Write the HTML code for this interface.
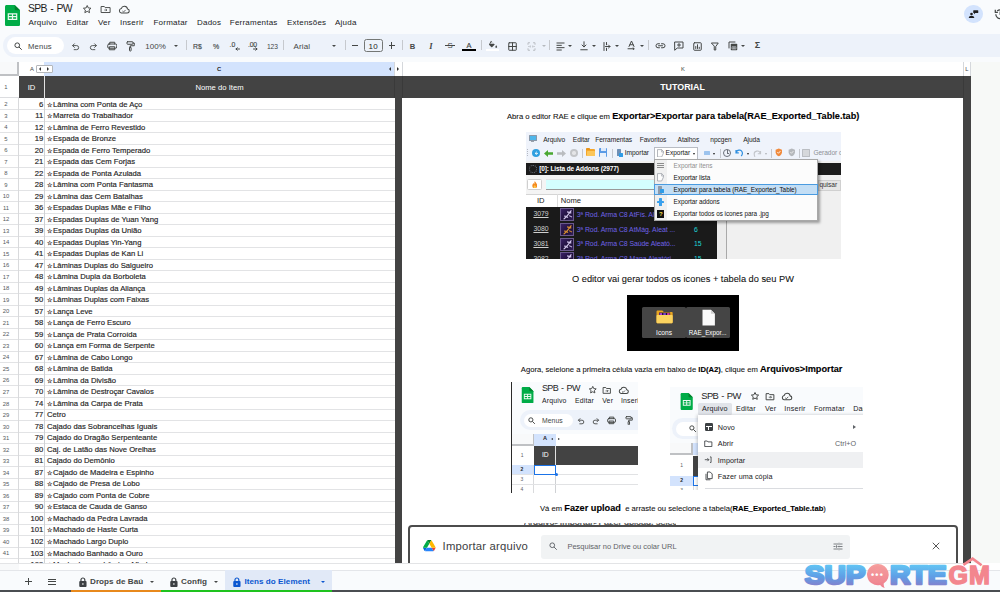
<!DOCTYPE html>
<html lang="pt-BR">
<head>
<meta charset="utf-8">
<title>SPB - PW</title>
<style>
*{box-sizing:border-box;margin:0;padding:0}
html,body{width:1000px;height:592px;overflow:hidden;background:#f9fbfd;font-family:"Liberation Sans",Arial,sans-serif;color:#1f1f1f}
.abs,.abs *{position:absolute}
#page{position:relative;width:1000px;height:592px;overflow:hidden;background:#f9fbfd}
#page div,#page span,#page svg{position:absolute}
.t{white-space:nowrap;line-height:1}
/* header */
#title{left:28px;top:3.200px;font-size:10.400px;letter-spacing:-.7px;word-spacing:1.300px;color:#1f1f1f;white-space:nowrap;line-height:12px}
.menu{top:17px;font-size:8px;letter-spacing:.22px;color:#202124;white-space:nowrap;line-height:11px}
/* toolbar */
#tb{left:3px;top:34px;width:1010px;height:23px;background:#edf2fa;border-radius:11.5px}
#srch{left:7px;top:37px;width:57px;height:17px;border-radius:8.5px;background:#fff}
.tbt{top:41.500px;font-size:7.6px;color:#444746;white-space:nowrap;line-height:10px}
.sep{top:40.300px;width:.9px;height:10.200px;background:#c6c9ce}
.car{width:0;height:0;border-left:2.2px solid transparent;border-right:2.2px solid transparent;border-top:2.6px solid #444746;top:45px}
/* grid */
#grid{left:0;top:62px;width:971px;height:501px;background:#fff;overflow:hidden}
.r{left:0;width:395px;height:12px;border-bottom:1px solid #e2e3e5}
.rn{left:0;top:1px;width:12px;height:11.5px;text-align:center;font-size:5.900px;line-height:11.500px;color:#555a60}
.id{left:19px;top:.35px;-webkit-text-stroke:.16px #1f1f1f;width:24.2px;text-align:right;font-size:7.67px;line-height:11.5px;color:#1f1f1f;white-space:nowrap}
.nm{left:47px;top:.35px;-webkit-text-stroke:.16px #1f1f1f;font-size:7.67px;line-height:11.5px;color:#1f1f1f;white-space:nowrap}
.st{position:static !important;display:inline-block;width:6px;font-size:6.4px;font-weight:bold;-webkit-text-stroke:0;vertical-align:.4px;letter-spacing:0}
.ch{font-size:5.800px;line-height:9px;text-align:center;color:#444746}
.hd{height:21.500px;line-height:21.500px;text-align:center;color:#fff;font-size:7.670px;white-space:nowrap}
.tri-l{width:0;height:0;border-top:2.100px solid transparent;border-bottom:2.100px solid transparent;border-right:2.800px solid #333}
.tri-r{width:0;height:0;border-top:2.100px solid transparent;border-bottom:2.100px solid transparent;border-left:2.800px solid #333}
#rows{left:0;top:62px;width:395px;height:501.400px;overflow:hidden}
.tab{top:575.500px;font-size:8.100px;font-weight:bold;color:#444746;white-space:nowrap;line-height:11px;letter-spacing:.05px}
.tt{white-space:pre;font-size:7.670px;line-height:12px;color:#111;-webkit-text-stroke:.08px #111}
.tt b{position:static !important;font-size:9.200px;-webkit-text-stroke:.1px #000;color:#000}
.tt b.s{font-size:7.670px}
.s1{font-size:6.600px;color:#1a1a1a;letter-spacing:-.05px}
</style>
</head>
<body>
<div id="page">

<!-- ===== header ===== -->
<svg style="left:5px;top:5.100px" width="15" height="21" viewBox="0 0 15 21">
  <path d="M1.6 0h8.1L15 5.3v14.1c0 .9-.7 1.6-1.6 1.6H1.6C.7 21 0 20.300 0 19.400V1.600C0 .7.7 0 1.600 0z" fill="#00ac47"/>
  <path d="M9.700 0L15 5.300h-3.700c-.9 0-1.600-.7-1.600-1.600z" fill="#00832d"/>
  <path d="M2.700 8.200v6.800h9.600V8.200zm1.200 1.200h3v1.600h-3zm4.200 0h3v1.600h-3zm-4.200 2.800h3v1.600h-3zm4.200 0h3v1.600h-3z" fill="#fff" fill-opacity=".92"/>
</svg>
<div id="title">SPB - PW</div>
<!-- star / move / cloud -->
<svg style="left:82.400px;top:3.900px" width="10.400" height="10.400" viewBox="0 0 24 24" fill="none" stroke="#444746" stroke-width="2.200" stroke-linejoin="round"><path d="M12 3.500l2.600 5.600 6.100.7-4.500 4.200 1.200 6L12 17l-5.400 3 1.200-6-4.500-4.200 6.100-.7z"/></svg>
<svg style="left:100.400px;top:5.200px" width="11.200" height="8.600" viewBox="0 0 26 20" fill="none" stroke="#444746" stroke-width="2.200" stroke-linejoin="round"><path d="M2.500 3.500h7.500l2 2.500h11.500v11.500h-21z"/><path d="M10 11.700h6M13.500 9.200l2.500 2.500-2.500 2.500" stroke-width="1.800"/></svg>
<svg style="left:118.400px;top:5px" width="12" height="9.200" viewBox="0 0 26 20" fill="none" stroke="#444746" stroke-width="2.200" stroke-linejoin="round"><path d="M7 17.500h13a4.500 4.500 0 0 0 .6-8.950A7 7 0 0 0 7 7.700 5 5 0 0 0 7 17.500z"/><path d="M9.500 13l2.500 2.300 4.500-4.600" stroke-width="1.800"/></svg>

<div class="menu" style="left:28.400px">Arquivo</div>
<div class="menu" style="left:66.500px">Editar</div>
<div class="menu" style="left:98px">Ver</div>
<div class="menu" style="left:120px">Inserir</div>
<div class="menu" style="left:153.500px">Formatar</div>
<div class="menu" style="left:197px">Dados</div>
<div class="menu" style="left:229.800px">Ferramentas</div>
<div class="menu" style="left:287px">Extensões</div>
<div class="menu" style="left:335px">Ajuda</div>

<!-- top right buttons -->
<div style="left:964.300px;top:4.600px;width:18.600px;height:18.600px;border-radius:9.300px;background:#d3e3fd"></div>
<svg style="left:967.800px;top:8.800px" width="11" height="10" viewBox="0 0 22 20" fill="#1f1f1f"><circle cx="7" cy="10" r="2.600"/><path d="M1.500 18c0-3 2.500-4.600 5.500-4.600s5.500 1.600 5.500 4.600z"/><rect x="10.500" y="2.500" width="10" height="5.500" rx="1.200"/><path d="M12 7.500v3l3-3z"/></svg>
<svg style="left:993.500px;top:7.600px" width="12.400" height="12.400" viewBox="0 0 24 24" fill="none" stroke="#444746" stroke-width="2.400"><path d="M3.500 12a8.500 8.500 0 1 0 2.700-6.200"/><path d="M2.500 3.500v5h5" stroke-linejoin="round"/><path d="M12 7v5.500l3.500 2"/></svg>

<!-- ===== toolbar ===== -->
<div id="tb"></div>
<div id="srch"></div>
<svg style="left:13.500px;top:41.500px" width="8.500" height="8.500" viewBox="0 0 17 17" fill="none" stroke="#444746" stroke-width="2"><circle cx="6.500" cy="6.500" r="4.700"/><path d="M10 10l5.500 5.500"/></svg>
<div class="tbt" style="left:28px;font-size:7.700px;letter-spacing:.15px">Menus</div>
<svg style="left:70.70px;top:41.60px" width="9" height="9" viewBox="0 0 20 20" ><path d="M4 8h8.500a4.500 4.500 0 0 1 0 9H7" fill="none" stroke="#444746" stroke-width="2" stroke-linecap="round" stroke-linejoin="round"/><path d="M7.500 4L3.500 8l4 4" fill="none" stroke="#444746" stroke-width="2" stroke-linecap="round" stroke-linejoin="round"/></svg>
<svg style="left:89.10px;top:41.60px" width="9" height="9" viewBox="0 0 20 20" ><path d="M16 8H7.500a4.500 4.500 0 0 0 0 9H13" fill="none" stroke="#444746" stroke-width="2" stroke-linecap="round" stroke-linejoin="round"/><path d="M12.500 4l4 4-4 4" fill="none" stroke="#444746" stroke-width="2" stroke-linecap="round" stroke-linejoin="round"/></svg>
<svg style="left:106.55px;top:41.10px" width="10.5" height="10" viewBox="0 0 21 20" ><path d="M5.500 6V2.500h10V6" fill="none" stroke="#444746" stroke-width="2" stroke-linecap="round" stroke-linejoin="round"/><rect x="1.500" y="6" width="18" height="8.500" rx="2.500" fill="none" stroke="#444746" stroke-width="2" stroke-linecap="round" stroke-linejoin="round"/><rect x="5.500" y="11.500" width="10" height="6" fill="none" stroke="#444746" stroke-width="2" stroke-linecap="round" stroke-linejoin="round" fill="#edf2fa"/></svg>
<svg style="left:125.70px;top:40.60px" width="9" height="11" viewBox="0 0 18 22" ><rect x="2" y="1.500" width="12" height="5" rx="1.200" fill="none" stroke="#444746" stroke-width="2" stroke-linecap="round" stroke-linejoin="round"/><path d="M14 4h2.500v5.500H8.500v3" fill="none" stroke="#444746" stroke-width="2" stroke-linecap="round" stroke-linejoin="round"/><rect x="7" y="12.500" width="3.200" height="7.500" rx="1" fill="none" stroke="#444746" stroke-width="2" stroke-linecap="round" stroke-linejoin="round"/></svg>
<div class="tbt" style="left:145.2px;font-size:8px;letter-spacing:.1px">100%</div>
<div class="car" style="left:173.80px;border-top-color:#444746"></div>
<div class="sep" style="left:185.90px"></div>
<div class="tbt" style="left:193px;font-size:6.900px;letter-spacing:-.1px;-webkit-text-stroke:.14px #444746">R$</div>
<div class="tbt" style="left:213px;font-size:7px;-webkit-text-stroke:.14px #444746">%</div>
<div class="tbt" style="left:229.5px;font-size:6.900px;-webkit-text-stroke:.14px #444746;top:39.700px">.0</div>
<svg style="left:234.50px;top:47.20px" width="5" height="4" viewBox="0 0 10 8" ><path d="M9 4H2M4.500 1.500L2 4l2.500 2.500" fill="none" stroke="#444746" stroke-width="2" stroke-linecap="round" stroke-linejoin="round" stroke-width="1.700"/></svg>
<div class="tbt" style="left:248px;font-size:6.900px;-webkit-text-stroke:.14px #444746;top:39.700px;letter-spacing:-.2px">.00</div>
<svg style="left:253.00px;top:47.20px" width="5" height="4" viewBox="0 0 10 8" ><path d="M1 4h7M5.500 1.500L8 4 5.500 6.500" fill="none" stroke="#444746" stroke-width="2" stroke-linecap="round" stroke-linejoin="round" stroke-width="1.700"/></svg>
<div class="tbt" style="left:267px;font-size:6.700px;letter-spacing:-.1px">123</div>
<div class="sep" style="left:283.10px"></div>
<div class="tbt" style="left:293.6px;font-size:8px;letter-spacing:.1px">Arial</div>
<div class="car" style="left:331.60px;border-top-color:#444746"></div>
<div class="sep" style="left:345.00px"></div>
<div style="left:351.500px;top:45px;width:6.400px;height:1.200px;background:#444746"></div>
<div style="left:363.600px;top:39.300px;width:19.800px;height:13px;border:1px solid #747775;border-radius:2.500px"></div>
<div class="tbt" style="left:368.6px;font-size:8px;letter-spacing:.1px;color:#1f1f1f">10</div>
<div style="left:388.500px;top:45px;width:6.400px;height:1.200px;background:#444746"></div><div style="left:391.100px;top:42.400px;width:1.200px;height:6.400px;background:#444746"></div>
<div class="sep" style="left:401.50px"></div>
<div class="tbt" style="left:409.8px;font-size:7.600px;font-weight:bold;top:41.600px">B</div>
<div class="tbt" style="left:429.2px;font-size:8.500px;font-weight:bold;font-style:italic;font-family:'Liberation Serif',serif;top:41.200px">I</div>
<div class="tbt" style="left:447.6px;font-size:7.800px;top:41px">S</div>
<div style="left:445px;top:45.300px;width:10px;height:1px;background:#444746"></div>
<div class="tbt" style="left:466.5px;font-size:7.400px;top:40.600px;-webkit-text-stroke:.2px #444746">A</div>
<div style="left:462.200px;top:49px;width:13.600px;height:2px;background:#000"></div>
<div class="sep" style="left:480.80px"></div>
<svg style="left:487.50px;top:39.70px" width="10" height="8" viewBox="0 0 20 16" ><path d="M6 1.500l7.500 7.500-5 5a1.400 1.400 0 0 1-2 0L2.500 10a1.400 1.400 0 0 1 0-2z" fill="#444746"/><path d="M4 7.500L8.200 3.300l4.200 4.200z" fill="#edf2fa"/><path d="M16.500 10.500s1.800 2.200 1.800 3.300a1.800 1.800 0 0 1-3.600 0c0-1.100 1.800-3.300 1.800-3.300z" fill="#444746"/></svg>
<div style="left:486px;top:49px;width:13.200px;height:2px;background:#fff"></div>
<svg style="left:507.70px;top:41.60px" width="9" height="9" viewBox="0 0 18 18" ><rect x="1.500" y="1.500" width="15" height="15" rx="1" fill="none" stroke="#444746" stroke-width="2" stroke-linecap="round" stroke-linejoin="round"/><path d="M9 1.500v15M1.500 9h15" fill="none" stroke="#444746" stroke-width="2" stroke-linecap="round" stroke-linejoin="round"/></svg>
<svg style="left:526.90px;top:41.60px" width="9" height="9" viewBox="0 0 18 18" ><path d="M6 1.500H2v4M2 12.500v4h4M12 1.500h4v4M16 12.500v4h-4M5 9H2.500M13 9h2.500M6.500 7v4M11.500 7v4" fill="none" stroke="#b6b9be" stroke-width="1.800"/></svg>
<div class="car" style="left:541.80px;border-top-color:#b6b9be"></div>
<div class="sep" style="left:549.10px"></div>
<svg style="left:555.50px;top:41.60px" width="9" height="9" viewBox="0 0 18 18" ><path d="M1 2h16M1 6.700h10.500M1 11.300h16M1 16h10.500" fill="none" stroke="#444746" stroke-width="2"/></svg>
<div class="car" style="left:568.20px;border-top-color:#444746"></div>
<svg style="left:579.70px;top:41.10px" width="8" height="10" viewBox="0 0 16 20" ><path d="M8 1.500v10M4 8l4 4 4-4M1.500 17.500h13" fill="none" stroke="#444746" stroke-width="2" stroke-linecap="round" stroke-linejoin="round"/></svg>
<div class="car" style="left:591.50px;border-top-color:#444746"></div>
<svg style="left:603.20px;top:41.60px" width="8" height="9" viewBox="0 0 16 18" ><path d="M2 1v16M7 1v4.500M7 12.500V17M5 9h9M11 6l3 3-3 3" fill="none" stroke="#444746" stroke-width="2" stroke-linecap="round" stroke-linejoin="round" stroke-width="1.800"/></svg>
<div class="car" style="left:615.40px;border-top-color:#444746"></div>
<svg style="left:626.50px;top:40.30px" width="9" height="10" viewBox="0 0 18 20" ><path d="M4 13l5-11 5 11M6 9.500h6" fill="none" stroke="#444746" stroke-width="2" stroke-linecap="round" stroke-linejoin="round" stroke-width="1.900"/><path d="M2 17.500h12M12 15.500l2.200 2-2.200 2" fill="none" stroke="#444746" stroke-width="2" stroke-linecap="round" stroke-linejoin="round" stroke-width="1.500"/></svg>
<div class="car" style="left:639.60px;border-top-color:#444746"></div>
<div class="sep" style="left:648.10px"></div>
<svg style="left:654.50px;top:43.35px" width="11" height="5.5" viewBox="0 0 22 11" ><path d="M9 1.500H6a4 4 0 0 0 0 8h3M13 1.500h3a4 4 0 0 1 0 8h-3M7 5.500h8" fill="none" stroke="#444746" stroke-width="2" stroke-linecap="round" stroke-linejoin="round" stroke-width="1.900"/></svg>
<svg style="left:673.80px;top:41.00px" width="10" height="10" viewBox="0 0 20 20" ><path d="M2 2h16v12H6.500L2 18z" fill="none" stroke="#444746" stroke-width="2" stroke-linecap="round" stroke-linejoin="round"/><path d="M10 5v6M7 8h6" fill="none" stroke="#444746" stroke-width="2" stroke-linecap="round" stroke-linejoin="round" stroke-width="1.800"/></svg>
<svg style="left:692.70px;top:41.60px" width="9" height="9" viewBox="0 0 18 18" ><rect x="1.500" y="1.500" width="15" height="15" rx="1.500" fill="none" stroke="#444746" stroke-width="2" stroke-linecap="round" stroke-linejoin="round"/><path d="M5.500 13V9M9 13V5.500M12.500 13v-2.500" fill="none" stroke="#444746" stroke-width="2" stroke-linecap="round" stroke-linejoin="round" stroke-width="1.800"/></svg>
<svg style="left:711.20px;top:41.60px" width="8" height="9" viewBox="0 0 16 18" ><path d="M1.500 2h13L9.500 9v7h-3V9z" fill="none" stroke="#444746" stroke-width="2" stroke-linecap="round" stroke-linejoin="round"/></svg>
<svg style="left:727.80px;top:41.10px" width="10" height="10" viewBox="0 0 20 20" ><path d="M2 14V2h12" fill="none" stroke="#444746" stroke-width="2" stroke-linecap="round" stroke-linejoin="round"/><rect x="5.500" y="5.500" width="13" height="13" rx="1.500" fill="#444746"/><path d="M8 11.500h8v4.500H8zM10.700 11.500v4.500M13.400 11.500v4.500" fill="none" stroke="#edf2fa" stroke-width="1"/></svg>
<div class="car" style="left:741.30px;border-top-color:#444746"></div>
<div class="tbt" style="left:754.8px;font-size:9px;font-weight:bold;top:40.300px">Σ</div>

<!-- ===== grid ===== -->
<div style="left:971px;top:61.700px;width:29px;height:509px;background:#f7f9f7"></div>
<div id="grid"></div>
<div id="rows"><div class="r" style="top:36.2px"><span class="rn">2</span><span class="id">6</span><span class="nm"><span class="st">☆</span>Lâmina com Ponta de Aço</span></div>
<div class="r" style="top:47.712px"><span class="rn">3</span><span class="id">11</span><span class="nm"><span class="st">☆</span>Marreta do Trabalhador</span></div>
<div class="r" style="top:59.224000000000004px"><span class="rn">4</span><span class="id">12</span><span class="nm"><span class="st">☆</span>Lâmina de Ferro Revestido</span></div>
<div class="r" style="top:70.736px"><span class="rn">5</span><span class="id">19</span><span class="nm"><span class="st">☆</span>Espada de Bronze</span></div>
<div class="r" style="top:82.248px"><span class="rn">6</span><span class="id">20</span><span class="nm"><span class="st">☆</span>Espada de Ferro Temperado</span></div>
<div class="r" style="top:93.76px"><span class="rn">7</span><span class="id">21</span><span class="nm"><span class="st">☆</span>Espada das Cem Forjas</span></div>
<div class="r" style="top:105.272px"><span class="rn">8</span><span class="id">22</span><span class="nm"><span class="st">☆</span>Espada de Ponta Azulada</span></div>
<div class="r" style="top:116.784px"><span class="rn">9</span><span class="id">28</span><span class="nm"><span class="st">☆</span>Lâmina com Ponta Fantasma</span></div>
<div class="r" style="top:128.296px"><span class="rn">10</span><span class="id">29</span><span class="nm"><span class="st">☆</span>Lâmina das Cem Batalhas</span></div>
<div class="r" style="top:139.808px"><span class="rn">11</span><span class="id">36</span><span class="nm"><span class="st">☆</span>Espadas Duplas Mãe e Filho</span></div>
<div class="r" style="top:151.32px"><span class="rn">12</span><span class="id">37</span><span class="nm"><span class="st">☆</span>Espadas Duplas de Yuan Yang</span></div>
<div class="r" style="top:162.832px"><span class="rn">13</span><span class="id">39</span><span class="nm"><span class="st">☆</span>Espadas Duplas da União</span></div>
<div class="r" style="top:174.344px"><span class="rn">14</span><span class="id">40</span><span class="nm"><span class="st">☆</span>Espadas Duplas Yin-Yang</span></div>
<div class="r" style="top:185.856px"><span class="rn">15</span><span class="id">41</span><span class="nm"><span class="st">☆</span>Espadas Duplas de Kan Li</span></div>
<div class="r" style="top:197.368px"><span class="rn">16</span><span class="id">47</span><span class="nm"><span class="st">☆</span>Lâminas Duplas do Salgueiro</span></div>
<div class="r" style="top:208.88px"><span class="rn">17</span><span class="id">48</span><span class="nm"><span class="st">☆</span>Lâmina Dupla da Borboleta</span></div>
<div class="r" style="top:220.392px"><span class="rn">18</span><span class="id">49</span><span class="nm"><span class="st">☆</span>Lâminas Duplas da Aliança</span></div>
<div class="r" style="top:231.904px"><span class="rn">19</span><span class="id">50</span><span class="nm"><span class="st">☆</span>Lâminas Duplas com Faixas</span></div>
<div class="r" style="top:243.416px"><span class="rn">20</span><span class="id">57</span><span class="nm"><span class="st">☆</span>Lança Leve</span></div>
<div class="r" style="top:254.928px"><span class="rn">21</span><span class="id">58</span><span class="nm"><span class="st">☆</span>Lança de Ferro Escuro</span></div>
<div class="r" style="top:266.44px"><span class="rn">22</span><span class="id">59</span><span class="nm"><span class="st">☆</span>Lança de Prata Corroída</span></div>
<div class="r" style="top:277.952px"><span class="rn">23</span><span class="id">60</span><span class="nm"><span class="st">☆</span>Lança em Forma de Serpente</span></div>
<div class="r" style="top:289.464px"><span class="rn">24</span><span class="id">67</span><span class="nm"><span class="st">☆</span>Lâmina de Cabo Longo</span></div>
<div class="r" style="top:300.976px"><span class="rn">25</span><span class="id">68</span><span class="nm"><span class="st">☆</span>Lâmina de Batida</span></div>
<div class="r" style="top:312.488px"><span class="rn">26</span><span class="id">69</span><span class="nm"><span class="st">☆</span>Lâmina da Divisão</span></div>
<div class="r" style="top:324.0px"><span class="rn">27</span><span class="id">70</span><span class="nm"><span class="st">☆</span>Lâmina de Destroçar Cavalos</span></div>
<div class="r" style="top:335.512px"><span class="rn">28</span><span class="id">74</span><span class="nm"><span class="st">☆</span>Lâmina da Carpa de Prata</span></div>
<div class="r" style="top:347.024px"><span class="rn">29</span><span class="id">77</span><span class="nm">Cetro</span></div>
<div class="r" style="top:358.536px"><span class="rn">30</span><span class="id">78</span><span class="nm">Cajado das Sobrancelhas Iguais</span></div>
<div class="r" style="top:370.048px"><span class="rn">31</span><span class="id">79</span><span class="nm">Cajado do Dragão Serpenteante</span></div>
<div class="r" style="top:381.56px"><span class="rn">32</span><span class="id">80</span><span class="nm">Caj. de Latão das Nove Orelhas</span></div>
<div class="r" style="top:393.072px"><span class="rn">33</span><span class="id">81</span><span class="nm">Cajado do Demônio</span></div>
<div class="r" style="top:404.584px"><span class="rn">34</span><span class="id">87</span><span class="nm"><span class="st">☆</span>Cajado de Madeira e Espinho</span></div>
<div class="r" style="top:416.096px"><span class="rn">35</span><span class="id">88</span><span class="nm"><span class="st">☆</span>Cajado de Presa de Lobo</span></div>
<div class="r" style="top:427.608px"><span class="rn">36</span><span class="id">89</span><span class="nm"><span class="st">☆</span>Cajado com Ponta de Cobre</span></div>
<div class="r" style="top:439.12px"><span class="rn">37</span><span class="id">90</span><span class="nm"><span class="st">☆</span>Estaca de Cauda de Ganso</span></div>
<div class="r" style="top:450.632px"><span class="rn">38</span><span class="id">100</span><span class="nm"><span class="st">☆</span>Machado da Pedra Lavrada</span></div>
<div class="r" style="top:462.144px"><span class="rn">39</span><span class="id">101</span><span class="nm"><span class="st">☆</span>Machado de Haste Curta</span></div>
<div class="r" style="top:473.656px"><span class="rn">40</span><span class="id">102</span><span class="nm"><span class="st">☆</span>Machado Largo Duplo</span></div>
<div class="r" style="top:485.168px"><span class="rn">41</span><span class="id">103</span><span class="nm"><span class="st">☆</span>Machado Banhado a Ouro</span></div>
<div class="r" style="top:496.68px"><span class="rn">42</span><span class="id">109</span><span class="nm"><span class="st">☆</span>Machado com Lâmina Afiada</span></div></div>
<div style="left:0;top:62px;width:17.200px;height:11.700px;background:#f8f9fa"></div>
<div style="left:17.200px;top:62px;width:1.700px;height:13.600px;background:#bfc1c4"></div>
<div style="left:0;top:73.700px;width:18.900px;height:1.900px;background:#bfc1c4"></div>
<div style="left:44.300px;top:62px;width:350.200px;height:14px;background:#d3e3fd"></div>
<div class="ch" style="left:28px;top:64.500px;width:8px">A</div>
<div class="ch" style="left:215px;top:64.500px;width:8px;font-weight:bold;color:#1f1f1f">C</div>
<div class="ch" style="left:679px;top:64.500px;width:8px">K</div>
<div class="ch" style="left:962.800px;top:64.500px;width:8px">L</div>
<div style="left:36.400px;top:65px;width:16.200px;height:7.800px;background:#fff;border:1px solid #b4b7bb;border-radius:1px"></div>
<div class="tri-l" style="left:39px;top:66.800px"></div><div class="tri-r" style="left:47.200px;top:66.800px"></div>
<div class="tri-l" style="left:389px;top:66.800px"></div><div class="tri-r" style="left:397.200px;top:66.800px"></div>
<div style="left:394.300px;top:62px;width:.7px;height:14px;background:#d5d8dc"></div>
<div style="left:401.800px;top:62px;width:.7px;height:14px;background:#d5d8dc"></div>
<div style="left:962.800px;top:62px;width:.8px;height:14px;background:#d5d8dc"></div>
<div style="left:970.400px;top:62px;width:.8px;height:14px;background:#d5d8dc"></div>
<div style="left:19px;top:75.800px;width:952px;height:21.800px;background:#434343"></div>
<div style="left:394.600px;top:75.800px;width:7.500px;height:487.600px;background:#434343"></div>
<div style="left:963.200px;top:75.800px;width:7.800px;height:487.600px;background:#434343"></div>
<div style="left:394.300px;top:75.800px;width:.7px;height:21.800px;background:#3a3a3a"></div>
<div style="left:401.800px;top:75.800px;width:.7px;height:21.800px;background:#3a3a3a"></div>
<div style="left:962.800px;top:75.800px;width:.7px;height:21.800px;background:#3a3a3a"></div>
<div style="left:18.200px;top:97.600px;width:.8px;height:472.600px;background:#d9dadc"></div>
<div style="left:43.900px;top:75.800px;width:1.100px;height:21.800px;background:#e3e3e3"></div>
<div style="left:44px;top:97.600px;width:.9px;height:465.800px;background:#d0d2d5"></div>
<div class="rn" style="top:82px;left:0">1</div>
<div style="left:0;top:97px;width:18.500px;height:.8px;background:#dcdde0"></div>
<div class="hd" style="left:19px;top:76.600px;width:25px">ID</div>
<div class="hd" style="left:45px;top:76.600px;width:349px">Nome do Item</div>
<div class="hd" style="left:402px;top:76.800px;width:561px;font-weight:bold;font-size:8.900px">TUTORIAL</div>
<div class="tt" style="left:507.00px;top:109.80px;">Abra o editor RAE e clique em <b>Exportar&gt;Exportar para tabela(RAE_Exported_Table.tab)</b></div>
<div class="tt" style="left:572.00px;top:272.50px;font-size:9.250px">O editor vai gerar todos os icones + tabela do seu PW</div>
<div class="tt" style="left:520.80px;top:362.80px;">Agora, seleione a primeira célula vazia em baixo de <b class="s">ID(A2)</b>, clique em <b>Arquivos&gt;Importar</b></div>
<div class="tt" style="left:540.00px;top:502.30px;">Vá em <b>Fazer upload</b>&nbsp; e arraste ou selecione a tabela(<b class="s">RAE_Exported_Table.tab</b>)</div>
<div style="left:525.60px;top:132.00px;width:315.40px;height:126.60px;overflow:hidden;background:#fff"><div style="left:0.00px;top:0.00px;width:315.40px;height:29.00px;background:#eff3fb"></div>
<div style="left:0.00px;top:29.20px;width:315.40px;height:14.20px;background:#f0f0f0"></div>
<div style="left:0.00px;top:30.60px;width:315.40px;height:12.10px;background:#1c1c1c"></div>
<div style="left:0.00px;top:42.70px;width:201.00px;height:19.00px;background:#f4f4f4"></div>
<div style="left:201.20px;top:42.70px;width:114.20px;height:84.00px;background:#f0f0f0"></div>
<div style="left:200.60px;top:42.70px;width:1.00px;height:84.00px;background:#a9a9a9"></div>
<div style="left:190.90px;top:42.70px;width:9.70px;height:84.00px;background:#ececec"></div>
<div style="left:3.20px;top:3.20px;width:8.00px;height:5.60px;background:#4fb6ea;border:0.8px solid #8a98a8;border-radius:.6px"></div>
<div style="left:5.70px;top:9.00px;width:3.00px;height:1.40px;background:#9aa3ad"></div>
<div class="t s1" style="left:17.60px;top:4.50px;">Arquivo</div>
<div class="t s1" style="left:47.20px;top:4.50px;">Editar</div>
<div class="t s1" style="left:69.60px;top:4.50px;">Ferramentas</div>
<div class="t s1" style="left:114.10px;top:4.50px;">Favoritos</div>
<div class="t s1" style="left:152.00px;top:4.50px;">Atalhos</div>
<div class="t s1" style="left:184.70px;top:4.50px;">npcgen</div>
<div class="t s1" style="left:217.60px;top:4.50px;">Ajuda</div>
<div style="left:1.40px;top:16.50px;width:1.00px;height:8.50px;background:repeating-linear-gradient(#b5b9c2 0 1px,transparent 1px 2px)"></div>
<div style="left:6.20px;top:16.70px;width:8.40px;height:8.40px;background:#2f9fe0;border-radius:50%"></div>
<svg style="left:8.00px;top:18.50px" width="4.800" height="4.800" viewBox="0 0 10 10"><path d="M6 1.500L2.500 5 6 8.500M2.500 5h6" fill="none" stroke="#fff" stroke-width="1.800"/></svg>
<svg style="left:18.70px;top:17.50px" width="9" height="7" viewBox="0 0 18 14"><path d="M8 0L0 7l8 7v-4.300h10V4.300H8z" fill="#4aa832"/></svg>
<svg style="left:31.20px;top:17.50px" width="9" height="7" viewBox="0 0 18 14"><path d="M10 0l8 7-8 7v-4.300H0V4.300h10z" fill="#b9bcc0"/></svg>
<div style="left:44.40px;top:16.90px;width:8.00px;height:8.00px;background:#c3c5c8;border-radius:50%"></div>
<div style="left:46.70px;top:19.20px;width:3.40px;height:3.40px;background:#e4e5e7;border-radius:50%"></div>
<div style="left:56.80px;top:16.50px;width:0.80px;height:9.00px;background:#c5c8ce"></div>
<div style="left:60.60px;top:17.20px;width:8.60px;height:7.00px;background:#f4a62a;border-radius:1px"></div>
<div style="left:60.60px;top:16.40px;width:4.00px;height:1.60px;background:#e8951a;border-radius:.8px .8px 0 0"></div>
<div style="left:61.40px;top:19.00px;width:7.80px;height:5.20px;background:#fbc65a;border-radius:.6px"></div>
<div style="left:73.40px;top:16.30px;width:8.40px;height:9.00px;background:#5b9be6;border-radius:1px"></div>
<div style="left:75.20px;top:16.30px;width:4.80px;height:3.20px;background:#dfeafa"></div>
<div style="left:74.80px;top:21.20px;width:5.60px;height:4.10px;background:#eaf1fb"></div>
<div style="left:86.10px;top:16.50px;width:0.80px;height:9.00px;background:#c5c8ce"></div>
<div style="left:91.00px;top:16.80px;width:4.60px;height:7.60px;background:#6f8fb5;border-radius:.6px"></div>
<div style="left:93.00px;top:20.60px;width:4.00px;height:4.00px;background:#2e9be6;border-radius:.5px"></div>
<div class="t s1" style="left:99.20px;top:18.10px;">Importar</div>
<div style="left:128.20px;top:14.60px;width:44.60px;height:13.20px;background:#fff;border:.8px solid #b8bcc4"></div>
<svg style="left:131.00px;top:16.60px" width="7.400" height="8.600" viewBox="0 0 15 17"><path d="M1 1h8.500L14 6l-4.500 10H1z" fill="#fdfdfd" stroke="#8a8f98" stroke-width="1.300"/><path d="M9.500 1v5H14" fill="none" stroke="#8a8f98" stroke-width="1.200"/></svg>
<div class="t s1" style="left:140.00px;top:18.10px;">Exportar</div>
<div style="left:167.60px;top:20.80px;width:0.00px;height:0.00px;border-left:1.700px solid transparent;border-right:1.700px solid transparent;border-top:2.200px solid #222"></div>
<div style="left:178.40px;top:18.80px;width:6.00px;height:4.00px;background:#9cc3ee;border-radius:.5px"></div>
<div style="left:187.00px;top:20.80px;width:0.00px;height:0.00px;border-left:1.600px solid transparent;border-right:1.600px solid transparent;border-top:2.100px solid #222"></div>
<div style="left:194.20px;top:16.50px;width:0.80px;height:9.00px;background:#c5c8ce"></div>
<div style="left:197.60px;top:16.80px;width:8.00px;height:8.00px;border:1px solid #6b7079;border-radius:50%"></div>
<div style="left:201.20px;top:18.40px;width:0.90px;height:3.00px;background:#6b7079"></div>
<div style="left:201.20px;top:20.80px;width:2.40px;height:0.90px;background:#6b7079"></div>
<svg style="left:209.90px;top:17.00px" width="8.600" height="7.600" viewBox="0 0 17 15"><path d="M2 2v5.500h5.500M2.500 7A6 6 0 0 1 14.500 9.500c0 2-1 3.500-2.500 4.500" fill="none" stroke="#2f8fe0" stroke-width="2.400"/></svg>
<div style="left:221.20px;top:20.80px;width:0.00px;height:0.00px;border-left:1.600px solid transparent;border-right:1.600px solid transparent;border-top:2.100px solid #222"></div>
<svg style="left:227.60px;top:17.60px" width="8.600" height="7" viewBox="0 0 17 14"><path d="M15 2v5.500H9.500M14.500 7A6 6 0 0 0 2.500 9.500c0 1.600.6 3 1.600 4" fill="none" stroke="#c2c5ca" stroke-width="2.200"/></svg>
<div style="left:239.20px;top:20.80px;width:0.00px;height:0.00px;border-left:1.600px solid transparent;border-right:1.600px solid transparent;border-top:2.100px solid #b0b3b8"></div>
<div style="left:245.80px;top:16.50px;width:0.80px;height:9.00px;background:#c5c8ce"></div>
<svg style="left:249.80px;top:16.40px" width="7.600" height="8.800" viewBox="0 0 15 18"><path d="M7.500 1L14 3.500v5c0 4-3 7-6.500 8.500C4 15.500 1 12.500 1 8.500v-5z" fill="#f08a3c"/><path d="M4.500 8.500l2.300 2.300 4-4.500" fill="none" stroke="#fff" stroke-width="1.800"/></svg>
<svg style="left:262.30px;top:16.40px" width="7.600" height="8.800" viewBox="0 0 15 18"><path d="M7.500 1L14 3.500v5c0 4-3 7-6.500 8.500C4 15.500 1 12.500 1 8.500v-5z" fill="#b5b8bc"/><path d="M4.500 8.500l2.300 2.300 4-4.500" fill="none" stroke="#eee" stroke-width="1.800"/></svg>
<div style="left:273.80px;top:16.50px;width:0.80px;height:9.00px;background:#c5c8ce"></div>
<div style="left:276.80px;top:16.60px;width:7.20px;height:8.60px;background:#d6d8db;border:.8px solid #bbbec3;border-radius:.6px"></div>
<div class="t s1" style="left:287.80px;top:18.10px;color:#8d9096">Gerador de</div>
<div style="left:3.40px;top:32.60px;width:8.00px;height:8.00px;border:1.200px dotted #6f7782;border-radius:50%"></div>
<div class="t s1" style="left:13.60px;top:33.90px;color:#fff;font-weight:bold;font-size:6.500px;letter-spacing:-.12px">[0]: Lista de Addons (2977)</div>
<div style="left:1.60px;top:46.90px;width:14.40px;height:11.20px;background:#fff;border:.8px solid #cfcfcf;border-radius:1.500px"></div>
<svg style="left:6.00px;top:48.80px" width="5.600" height="7.400" viewBox="0 0 11 15"><path d="M5.500 0C6.500 3 10.500 5 10.500 9.500 10.500 13 8 15 5.500 15S.5 13 .5 9.500C.5 7 2 5.500 3 4c.3 1.500 1 2.300 1.500 2.500C4.500 4 4.800 2 5.500 0z" fill="#f58a1f"/><path d="M5.500 8c1 1.500 2.500 2.300 2.500 4.200C8 13.800 6.800 15 5.500 15S3 13.800 3 12.200C3 10.300 4.800 9.500 5.500 8z" fill="#fcc84a"/></svg>
<div style="left:20.80px;top:47.30px;width:180.00px;height:11.00px;background:#d4ffff;border-bottom:.8px solid #9a9a9a;border-top:.6px solid #e4e4e4"></div>
<div style="left:0.00px;top:61.60px;width:191.00px;height:13.50px;background:#fff;border-top:.7px solid #d5d5d5"></div>
<div style="left:31.40px;top:61.60px;width:0.70px;height:13.50px;background:#dcdcdc"></div>
<div class="t s1" style="left:11.40px;top:65.30px;font-size:7.600px;color:#222">ID</div>
<div class="t s1" style="left:35.20px;top:65.30px;font-size:7.600px;color:#222">Nome</div>
<div style="left:0.00px;top:75.10px;width:191.00px;height:52.00px;background:#1a1a1a"></div>
<div class="t s1" style="left:7.80px;top:79.40px;color:#cfcfcf;text-decoration:underline;font-size:6.900px;letter-spacing:-.05px">3079</div>
<div style="left:34.60px;top:75.70px;width:13.40px;height:13.80px;background:linear-gradient(135deg,#3a2166,#1d0f38 60%,#34205c);border:.8px solid #6a5a8c"></div>
<svg style="left:36.00px;top:76.80px" width="11" height="11.600" viewBox="0 0 11 12"><path d="M1.500 10.500C4 9 6 6 9.500 1.500M5 3c1.500 0 3 1 4.500 1M2 7.500c1.500-.5 2.500 0 4 1.500M7 7c1 0 2 .5 3 1.500" fill="none" stroke="#e6d8ff" stroke-width="1.200" stroke-opacity=".9"/></svg>
<div class="t s1" style="left:51.20px;top:79.50px;color:#6f62e8;font-size:6.900px;font-family:'Liberation Sans',sans-serif">3ª Rod. Arma C8 AtFís. Aleat...</div>
<div class="t s1" style="left:168.40px;top:79.50px;color:#1fd6d6;font-size:6.900px">5</div>
<div class="t s1" style="left:7.80px;top:94.40px;color:#cfcfcf;text-decoration:underline;font-size:6.900px;letter-spacing:-.05px">3080</div>
<div style="left:34.60px;top:90.70px;width:13.40px;height:13.80px;background:linear-gradient(135deg,#3a2166,#1d0f38 60%,#34205c);border:.8px solid #6a5a8c"></div>
<svg style="left:36.00px;top:91.80px" width="11" height="11.600" viewBox="0 0 11 12"><path d="M1.500 10.500C4 9 6 6 9.500 1.500M5 3c1.500 0 3 1 4.500 1M2 7.500c1.500-.5 2.500 0 4 1.500M7 7c1 0 2 .5 3 1.500" fill="none" stroke="#f0a030" stroke-width="1.200" stroke-opacity=".9"/></svg>
<div class="t s1" style="left:51.20px;top:94.50px;color:#6f62e8;font-size:6.900px;font-family:'Liberation Sans',sans-serif">3ª Rod. Arma C8 AtMág. Aleat ...</div>
<div class="t s1" style="left:168.40px;top:94.50px;color:#1fd6d6;font-size:6.900px">6</div>
<div class="t s1" style="left:7.80px;top:109.20px;color:#cfcfcf;text-decoration:underline;font-size:6.900px;letter-spacing:-.05px">3081</div>
<div style="left:34.60px;top:105.50px;width:13.40px;height:13.80px;background:linear-gradient(135deg,#3a2166,#1d0f38 60%,#34205c);border:.8px solid #6a5a8c"></div>
<svg style="left:36.00px;top:106.60px" width="11" height="11.600" viewBox="0 0 11 12"><path d="M1.500 10.500C4 9 6 6 9.500 1.500M5 3c1.500 0 3 1 4.500 1M2 7.500c1.500-.5 2.500 0 4 1.500M7 7c1 0 2 .5 3 1.500" fill="none" stroke="#e6d8ff" stroke-width="1.200" stroke-opacity=".9"/></svg>
<div class="t s1" style="left:51.20px;top:109.30px;color:#6f62e8;font-size:6.900px;font-family:'Liberation Sans',sans-serif">3ª Rod. Arma C8 Saúde Aleató...</div>
<div class="t s1" style="left:168.40px;top:109.30px;color:#1fd6d6;font-size:6.900px">15</div>
<div class="t s1" style="left:7.80px;top:124.00px;color:#cfcfcf;text-decoration:underline;font-size:6.900px;letter-spacing:-.05px">3082</div>
<div style="left:34.60px;top:120.30px;width:13.40px;height:13.80px;background:linear-gradient(135deg,#3a2166,#1d0f38 60%,#34205c);border:.8px solid #6a5a8c"></div>
<svg style="left:36.00px;top:121.40px" width="11" height="11.600" viewBox="0 0 11 12"><path d="M1.500 10.500C4 9 6 6 9.500 1.500M5 3c1.500 0 3 1 4.500 1M2 7.500c1.500-.5 2.500 0 4 1.500M7 7c1 0 2 .5 3 1.500" fill="none" stroke="#e6d8ff" stroke-width="1.200" stroke-opacity=".9"/></svg>
<div class="t s1" style="left:51.20px;top:124.10px;color:#6f62e8;font-size:6.900px;font-family:'Liberation Sans',sans-serif">3ª Rod. Arma C8 Mana Aleatóri...</div>
<div class="t s1" style="left:168.40px;top:124.10px;color:#1fd6d6;font-size:6.900px">15</div>
<div style="left:292.40px;top:48.00px;width:23.00px;height:11.00px;background:#e6e6e6;border:.7px solid #d0d0d0"></div>
<div class="t s1" style="left:293.80px;top:50.30px;color:#333">quisar</div>
<div style="left:128.20px;top:27.20px;width:164.40px;height:61.80px;background:#fcfcfc;border:.8px solid #a8a8a8;box-shadow:1.500px 1.500px 2.500px rgba(0,0,0,.35)"></div>
<div style="left:129.00px;top:28.00px;width:12.40px;height:60.20px;background:#f0f0f0"></div>
<div style="left:128.80px;top:51.80px;width:163.20px;height:11.60px;background:#c3def5;border:.8px solid #4a9be0"></div>
<div class="t s1" style="left:148.00px;top:31.10px;color:#8f8f8f;font-size:6.400px">Exportar itens</div>
<div class="t s1" style="left:148.00px;top:43.10px;color:#111;font-size:6.400px">Exportar lista</div>
<div class="t s1" style="left:148.00px;top:55.20px;color:#111;font-size:6.400px">Exportar para tabela (RAE_Exported_Table)</div>
<div class="t s1" style="left:148.00px;top:67.40px;color:#111;font-size:6.400px">Exportar addons</div>
<div class="t s1" style="left:148.00px;top:79.40px;color:#111;font-size:6.400px">Exportar todos os icones para .jpg</div>
<div style="left:131.40px;top:31.20px;width:6.60px;height:0.90px;background:#8c8c8c"></div>
<div style="left:131.40px;top:33.10px;width:6.60px;height:0.90px;background:#8c8c8c"></div>
<div style="left:131.40px;top:35.00px;width:6.60px;height:0.90px;background:#8c8c8c"></div>
<svg style="left:131.20px;top:41.20px" width="7.400" height="8.600" viewBox="0 0 15 17"><path d="M1 1h8.500L14 6l-4.500 10H1z" fill="#fdfdfd" stroke="#8a8f98" stroke-width="1.300"/><path d="M9.500 1v5H14" fill="none" stroke="#8a8f98" stroke-width="1.200"/></svg>
<div style="left:132.00px;top:53.60px;width:4.40px;height:8.00px;background:#8f9aa8;border-radius:.5px"></div>
<div style="left:134.20px;top:57.00px;width:4.20px;height:4.40px;background:#2e9be6;border-radius:.5px"></div>
<div style="left:131.20px;top:68.80px;width:7.60px;height:2.40px;background:#3aa0ec;border-radius:.6px"></div>
<div style="left:133.80px;top:66.20px;width:2.40px;height:7.60px;background:#3aa0ec;border-radius:.6px"></div>
<div style="left:131.60px;top:78.00px;width:6.40px;height:7.60px;background:#111"></div>
<div class="t s1" style="left:133.30px;top:78.90px;color:#ffe14a;font-weight:bold;font-size:6px">?</div></div>
<div style="left:626.60px;top:294.60px;width:112.60px;height:56.80px;background:#000"></div>
<div style="left:642.40px;top:307.00px;width:43.20px;height:30.80px;background:#454545;border-radius:1.500px"></div>
<div style="left:686.40px;top:307.00px;width:43.20px;height:30.80px;background:#454545;border-radius:1.500px"></div>
<svg style="left:655.800px;top:310.400px" width="17.200" height="13.200" viewBox="0 0 34 26"><path d="M1 3.500C1 2 2 1 3.500 1h9l3 3H31c1.200 0 2 .8 2 2v17.500c0 1.400-1 2.500-2.500 2.500h-27C2 26 1 25 1 23.500z" fill="#e9a521"/><rect x="6" y="5" width="22" height="9" fill="#1d1430"/><rect x="7" y="6" width="5" height="7" fill="#b03fd0"/><rect x="14.500" y="6" width="5" height="7" fill="#7b3fd0"/><rect x="22" y="6" width="5" height="7" fill="#d03fa0"/><path d="M1 12c0-1.200 1-2 2-2h28c1.200 0 2 .8 2 2v11.500c0 1.400-1 2.500-2.500 2.500h-27C2 26 1 25 1 23.500z" fill="#fbd35f"/></svg>
<svg style="left:701.800px;top:308.800px" width="13.400" height="17.200" viewBox="0 0 27 34"><path d="M1 1h17l8 8v24H1z" fill="#fafafa"/><path d="M18 1v8h8z" fill="#cfcfcf"/></svg>
<div class="t" style="left:656.00px;top:329.60px;color:#fff;font-size:6.600px;letter-spacing:.05px">Icons</div>
<div class="t" style="left:688.80px;top:329.60px;color:#fff;font-size:6.300px;letter-spacing:-.02px">RAE_Expor...</div>
<div style="left:511.60px;top:382.00px;width:126.20px;height:111.10px;overflow:hidden;background:#f9fbfd"><svg style="left:9.60px;top:4.50px" width="13.2" height="16.4" viewBox="0 0 15 21"><path d="M1.600 0h8.100L15 5.300v14.100c0 .9-.7 1.600-1.600 1.600H1.600C.7 21 0 20.300 0 19.400V1.600C0 .7.7 0 1.600 0z" fill="#00ac47"/><path d="M9.700 0L15 5.300h-3.700c-.9 0-1.600-.7-1.600-1.600z" fill="#00832d"/><path d="M2.700 8.800v6.800h9.600V8.800zm1.200 1.200h3v1.600h-3zm4.200 0h3v1.600h-3zm-4.200 2.800h3v1.600h-3zm4.200 0h3v1.600h-3z" fill="#fff" fill-opacity=".92"/></svg>
<div class="t" style="left:30.30px;top:1.40px;font-size:9px;letter-spacing:-.6px;word-spacing:1.100px;color:#1f1f1f;line-height:11px">SPB - PW</div>
<svg style="left:76.35px;top:2.85px" width="9.5" height="9.5" viewBox="0 0 24 24" fill="none" stroke="#444746" stroke-width="2.400" stroke-linejoin="round"><path d="M12 3.500l2.600 5.600 6.100.7-4.500 4.200 1.200 6L12 17l-5.400 3 1.200-6-4.500-4.200 6.100-.7z"/></svg>
<svg style="left:90.65px;top:3.55px" width="9.5" height="8.5" viewBox="0 0 24 22" fill="none" stroke="#444746" stroke-width="2.400" stroke-linejoin="round"><path d="M2.500 4h7l2 2.500h10V19h-19z"/><path d="M9 12.700h6.500M13 10l2.700 2.700L13 15.400" stroke-width="2"/></svg>
<svg style="left:106.40px;top:3.55px" width="11" height="8.5" viewBox="0 0 26 20" fill="none" stroke="#444746" stroke-width="2.400" stroke-linejoin="round"><path d="M7 17.500h13a4.500 4.500 0 0 0 .6-8.950A7 7 0 0 0 7 7.700 5 5 0 0 0 7 17.500z"/><path d="M9.500 13l2.500 2.300 4.500-4.600" stroke-width="2"/></svg>
<div class="t" style="left:30.30px;top:14.40px;font-size:6.900px;letter-spacing:.2px;color:#202124;line-height:9px">Arquivo</div>
<div class="t" style="left:63.30px;top:14.40px;font-size:6.900px;letter-spacing:.2px;color:#202124;line-height:9px">Editar</div>
<div class="t" style="left:90.60px;top:14.40px;font-size:6.900px;letter-spacing:.2px;color:#202124;line-height:9px">Ver</div>
<div class="t" style="left:109.30px;top:14.40px;font-size:6.900px;letter-spacing:.2px;color:#202124;line-height:9px">Inserir</div>
<div style="left:8.60px;top:28.40px;width:140.00px;height:19.90px;background:#edf2fa;border-radius:10px"></div>
<div style="left:12.00px;top:31.50px;width:49.30px;height:13.80px;background:#fff;border-radius:7px"></div>
<svg style="left:16.85px;top:34.65px" width="7.5" height="7.5" viewBox="0 0 17 17" fill="none" stroke="#444746" stroke-width="2.200"><circle cx="6.500" cy="6.500" r="4.700"/><path d="M10 10l5.500 5.500"/></svg>
<div class="t" style="left:30.30px;top:34.60px;font-size:6.800px;color:#444746;line-height:8px;letter-spacing:.1px">Menus</div>
<svg style="left:65.40px;top:34.50px" width="8" height="8" viewBox="0 0 20 20"><path d="M4 8h8.500a4.500 4.500 0 0 1 0 9H7" fill="none" stroke="#444746" stroke-width="2.200" stroke-linecap="round" stroke-linejoin="round"/><path d="M7.500 4L3.500 8l4 4" fill="none" stroke="#444746" stroke-width="2.200" stroke-linecap="round" stroke-linejoin="round"/></svg>
<svg style="left:80.00px;top:34.50px" width="8" height="8" viewBox="0 0 20 20"><path d="M16 8H7.500a4.500 4.500 0 0 0 0 9H13" fill="none" stroke="#444746" stroke-width="2.200" stroke-linecap="round" stroke-linejoin="round"/><path d="M12.500 4l4 4-4 4" fill="none" stroke="#444746" stroke-width="2.200" stroke-linecap="round" stroke-linejoin="round"/></svg>
<svg style="left:95.60px;top:34.10px" width="9.200" height="8.800" viewBox="0 0 21 20"><path d="M5.500 6V2.500h10V6" fill="none" stroke="#444746" stroke-width="2.200" stroke-linecap="round" stroke-linejoin="round"/><rect x="1.500" y="6" width="18" height="8.500" rx="2.500" fill="none" stroke="#444746" stroke-width="2.200" stroke-linecap="round" stroke-linejoin="round"/><rect x="5.500" y="11.500" width="10" height="6" fill="none" stroke="#444746" stroke-width="2.200" stroke-linecap="round" stroke-linejoin="round" fill="#edf2fa"/></svg>
<svg style="left:113.00px;top:33.70px" width="8" height="9.600" viewBox="0 0 18 22"><rect x="2" y="1.500" width="12" height="5" rx="1.200" fill="none" stroke="#444746" stroke-width="2.200" stroke-linecap="round" stroke-linejoin="round"/><path d="M14 4h2.500v5.500H8.500v3" fill="none" stroke="#444746" stroke-width="2.200" stroke-linecap="round" stroke-linejoin="round"/><rect x="7" y="12.500" width="3.200" height="7.500" rx="1" fill="none" stroke="#444746" stroke-width="2.200" stroke-linecap="round" stroke-linejoin="round"/></svg>
<div style="left:0.00px;top:51.70px;width:126.40px;height:59.50px;background:#fff"></div>
<div style="left:0.00px;top:51.70px;width:21.60px;height:10.60px;background:#f8f9fa"></div>
<div style="left:21.00px;top:51.70px;width:1.50px;height:12.20px;background:#bfc1c4"></div>
<div style="left:0.00px;top:62.30px;width:22.50px;height:1.60px;background:#bfc1c4"></div>
<div style="left:22.50px;top:51.70px;width:21.50px;height:12.20px;background:#d3e3fd"></div>
<div class="t" style="left:31.40px;top:54.40px;font-size:5.600px;font-weight:bold;color:#1f1f1f">A</div>
<div style="left:39.40px;top:56.30px;width:0.00px;height:0.00px;border-top:1.500px solid transparent;border-bottom:1.500px solid transparent;border-right:2px solid #333"></div>
<div style="left:46.40px;top:56.30px;width:0.00px;height:0.00px;border-top:1.500px solid transparent;border-bottom:1.500px solid transparent;border-left:2px solid #333"></div>
<div style="left:22.50px;top:63.90px;width:104.00px;height:19.20px;background:#434343"></div>
<div style="left:43.80px;top:63.90px;width:0.90px;height:48.00px;background:#cfd1d4"></div>
<div style="left:43.80px;top:63.90px;width:0.90px;height:19.20px;background:#e0e0e0"></div>
<div class="t" style="left:9.20px;top:71.40px;font-size:5px;color:#5f6368">1</div>
<div class="t" style="left:30.30px;top:70.40px;font-size:6.800px;color:#fff">ID</div>
<div style="left:0.00px;top:83.10px;width:22.50px;height:9.40px;background:#d3e3fd"></div>
<div class="t" style="left:9.00px;top:85.30px;font-size:5px;font-weight:bold;color:#1f1f1f">2</div>
<div class="t" style="left:9.00px;top:94.90px;font-size:5px;color:#5f6368">3</div>
<div class="t" style="left:9.00px;top:104.60px;font-size:5px;color:#5f6368">4</div>
<div style="left:21.80px;top:83.10px;width:0.80px;height:28.20px;background:#d9dadc"></div>
<div style="left:0.00px;top:92.40px;width:126.40px;height:0.80px;background:#e1e2e4"></div>
<div style="left:0.00px;top:102.10px;width:126.40px;height:0.80px;background:#e1e2e4"></div>
<div style="left:22.30px;top:83.00px;width:22.00px;height:9.80px;border:1px solid #1a73e8;background:#fff"></div>
<div style="left:43.10px;top:91.00px;width:3.20px;height:3.20px;background:#1a73e8;border-radius:50%"></div></div>
<div style="left:510.80px;top:382.00px;width:1.10px;height:111.10px;background:#2a2a2a"></div>
<div style="left:669.90px;top:386.80px;width:193.60px;height:103.00px;overflow:hidden;background:#f9fbfd"><svg style="left:10.60px;top:6.40px" width="13.4" height="17" viewBox="0 0 15 21"><path d="M1.600 0h8.100L15 5.300v14.100c0 .9-.7 1.600-1.600 1.600H1.600C.7 21 0 20.300 0 19.400V1.600C0 .7.7 0 1.600 0z" fill="#00ac47"/><path d="M9.700 0L15 5.300h-3.700c-.9 0-1.600-.7-1.600-1.600z" fill="#00832d"/><path d="M2.700 8.800v6.800h9.600V8.800zm1.200 1.200h3v1.600h-3zm4.200 0h3v1.600h-3zm-4.200 2.800h3v1.600h-3zm4.200 0h3v1.600h-3z" fill="#fff" fill-opacity=".92"/></svg>
<div class="t" style="left:31.40px;top:3.40px;font-size:9.400px;letter-spacing:-.62px;word-spacing:1.100px;color:#1f1f1f;line-height:11px">SPB - PW</div>
<svg style="left:79.80px;top:4.60px" width="10" height="10" viewBox="0 0 24 24" fill="none" stroke="#444746" stroke-width="2.400" stroke-linejoin="round"><path d="M12 3.500l2.600 5.600 6.100.7-4.500 4.200 1.200 6L12 17l-5.400 3 1.200-6-4.500-4.200 6.100-.7z"/></svg>
<svg style="left:95.50px;top:5.30px" width="10" height="9" viewBox="0 0 24 22" fill="none" stroke="#444746" stroke-width="2.400" stroke-linejoin="round"><path d="M2.500 4h7l2 2.500h10V19h-19z"/><path d="M9 12.700h6.500M13 10l2.700 2.700L13 15.400" stroke-width="2"/></svg>
<svg style="left:111.35px;top:5.30px" width="11.5" height="9" viewBox="0 0 26 20" fill="none" stroke="#444746" stroke-width="2.400" stroke-linejoin="round"><path d="M7 17.500h13a4.500 4.500 0 0 0 .6-8.950A7 7 0 0 0 7 7.700 5 5 0 0 0 7 17.500z"/><path d="M9.500 13l2.500 2.300 4.500-4.600" stroke-width="2"/></svg>
<div style="left:28.50px;top:16.10px;width:33.20px;height:11.70px;background:#e1e4e9;border-radius:1.500px"></div>
<div class="t" style="left:32.00px;top:17.50px;font-size:7.200px;letter-spacing:.2px;color:#202124;line-height:9px">Arquivo</div>
<div class="t" style="left:66.00px;top:17.50px;font-size:7.200px;letter-spacing:.2px;color:#202124;line-height:9px">Editar</div>
<div class="t" style="left:95.10px;top:17.50px;font-size:7.200px;letter-spacing:.2px;color:#202124;line-height:9px">Ver</div>
<div class="t" style="left:114.40px;top:17.50px;font-size:7.200px;letter-spacing:.2px;color:#202124;line-height:9px">Inserir</div>
<div class="t" style="left:144.10px;top:17.50px;font-size:7.200px;letter-spacing:.2px;color:#202124;line-height:9px">Formatar</div>
<div class="t" style="left:183.30px;top:17.50px;font-size:7.200px;letter-spacing:.2px;color:#202124;line-height:9px">Dados</div>
<div style="left:2.10px;top:31.70px;width:60.00px;height:21.00px;background:#edf2fa;border-radius:10.500px"></div>
<div style="left:6.10px;top:34.90px;width:60.00px;height:14.60px;background:#fff;border-radius:7.300px"></div>
<svg style="left:19.50px;top:38.10px" width="7.6" height="7.6" viewBox="0 0 17 17" fill="none" stroke="#444746" stroke-width="2.200"><circle cx="6.500" cy="6.500" r="4.700"/><path d="M10 10l5.500 5.500"/></svg>
<div style="left:0.00px;top:56.20px;width:30.00px;height:47.00px;background:#fff"></div>
<div style="left:0.00px;top:56.20px;width:22.00px;height:10.40px;background:#f8f9fa"></div>
<div style="left:21.50px;top:56.20px;width:1.50px;height:12.40px;background:#bfc1c4"></div>
<div style="left:0.00px;top:66.60px;width:23.00px;height:1.60px;background:#bfc1c4"></div>
<div style="left:23.30px;top:56.20px;width:6.00px;height:12.40px;background:#d3e3fd"></div>
<div style="left:23.50px;top:69.00px;width:6.00px;height:19.80px;background:#434343"></div>
<div class="t" style="left:10.30px;top:76.20px;font-size:5px;color:#5f6368">1</div>
<div style="left:0.00px;top:89.20px;width:23.20px;height:9.80px;background:#d3e3fd"></div>
<div class="t" style="left:10.30px;top:91.60px;font-size:5px;font-weight:bold;color:#1f1f1f">2</div>
<div class="t" style="left:10.30px;top:101.20px;font-size:5px;color:#5f6368">3</div>
<div style="left:22.70px;top:88.80px;width:0.80px;height:16.00px;background:#d9dadc"></div>
<div style="left:23.50px;top:88.80px;width:6.00px;height:10.40px;border:1px solid #1a73e8;background:#fff"></div>
<div style="left:28.50px;top:27.80px;width:170.00px;height:75.40px;background:#fff;box-shadow:0 1px 3px 1px rgba(60,64,67,.28)"></div>
<div style="left:28.50px;top:65.00px;width:170.00px;height:16.00px;background:#eff0f2"></div>
<div style="left:35.10px;top:101.60px;width:165.00px;height:0.80px;background:#dadce0"></div>
<div class="t" style="left:47.90px;top:35.90px;font-size:7.200px;letter-spacing:.08px;color:#202124;line-height:9px">Novo</div>
<div class="t" style="left:47.90px;top:52.10px;font-size:7.200px;letter-spacing:.08px;color:#202124;line-height:9px">Abrir</div>
<div class="t" style="left:47.90px;top:68.80px;font-size:7.200px;letter-spacing:.08px;color:#202124;line-height:9px">Importar</div>
<div class="t" style="left:47.90px;top:85.00px;font-size:7.200px;letter-spacing:.08px;color:#202124;line-height:9px">Fazer uma cópia</div>
<div class="t" style="left:165.10px;top:52.10px;font-size:7.200px;letter-spacing:.05px;color:#5f6368;line-height:9px">Ctrl+O</div>
<div style="left:182.70px;top:38.20px;width:0.00px;height:0.00px;border-top:2px solid transparent;border-bottom:2px solid transparent;border-left:3px solid #5f6368"></div>
<div style="left:34.90px;top:36.40px;width:7.80px;height:7.80px;background:#3c4043;border-radius:1.200px"></div>
<div style="left:35.70px;top:39.00px;width:6.20px;height:0.90px;background:#fff"></div>
<div style="left:37.70px;top:39.00px;width:0.90px;height:4.40px;background:#fff"></div>
<svg style="left:34.50px;top:52.80px" width="8.600" height="7.400" viewBox="0 0 24 20" fill="none" stroke="#3c4043" stroke-width="2.400" stroke-linejoin="round"><path d="M2 2.500h7l2 2.500h11V18H2z"/></svg>
<svg style="left:34.10px;top:69.60px" width="9" height="7.400" viewBox="0 0 24 20" fill="none" stroke="#3c4043" stroke-width="2.200"><path d="M2 10h11M9 6l4 4-4 4M19 2.500V17.500h-3M16 2.500h3"/></svg>
<svg style="left:34.70px;top:84.60px" width="8" height="9.600" viewBox="0 0 20 24" fill="none" stroke="#3c4043" stroke-width="2.200" stroke-linejoin="round"><path d="M6 2.500h7l5 5V19H6z"/><path d="M2.500 7v15h11"/></svg></div>
<div style="left:524.00px;top:522.50px;width:152.00px;height:2.90px;overflow:hidden"><div class="t" style="left:0.00px;top:-4.80px;font-size:9px;color:#555;line-height:9px;-webkit-text-stroke:.3px #555">Arquivo&gt;Importar&gt;Fazer upload, selecione</div></div>
<div style="left:408.00px;top:524.90px;width:549.80px;height:45.00px;border:2.100px solid #4c4c4c;border-radius:4px 4px 0 0;background:#fff"></div>
<svg style="left:423.400px;top:540.400px" width="12.600" height="11.300" viewBox="0 0 87.300 78"><path d="M6.600 66.850l3.850 6.650c.8 1.400 1.950 2.500 3.300 3.300L27.500 53H0c0 1.550.4 3.100 1.200 4.500z" fill="#0066da"/><path d="M43.650 25L29.900 1.200c-1.350.8-2.500 1.900-3.300 3.300L1.200 48.500C.4 49.900 0 51.450 0 53h27.500z" fill="#00ac47"/><path d="M73.550 76.800c1.350-.8 2.500-1.900 3.300-3.300l1.600-2.750L86.100 57.500c.8-1.400 1.200-2.950 1.200-4.500H59.800l5.850 11.500z" fill="#ea4335"/><path d="M43.650 25L57.400 1.200C56.050.4 54.500 0 52.900 0H34.400c-1.600 0-3.150.45-4.500 1.200z" fill="#00832d"/><path d="M59.800 53H27.500L13.750 76.800c1.350.8 2.900 1.200 4.500 1.200h50.800c1.600 0 3.150-.45 4.500-1.200z" fill="#2684fc"/><path d="M73.400 26.500L60.700 4.500c-.8-1.400-1.950-2.500-3.300-3.300L43.650 25 59.800 53h27.450c0-1.550-.4-3.100-1.200-4.500z" fill="#ffba00"/></svg>
<div class="t" style="left:442.60px;top:540.00px;font-size:11.300px;letter-spacing:.2px;color:#3c4043;line-height:13px">Importar arquivo</div>
<div style="left:541.00px;top:534.50px;width:308.50px;height:24.00px;background:#f1f3f4;border-radius:3px"></div>
<svg style="left:549px;top:542px" width="8.500" height="8.500" viewBox="0 0 17 17" fill="none" stroke="#5f6368" stroke-width="1.900"><circle cx="6.500" cy="6.500" r="4.700"/><path d="M10 10l5.500 5.500"/></svg>
<div class="t" style="left:567.40px;top:542.40px;font-size:7.500px;color:#5f6368;line-height:9px">Pesquisar no Drive ou colar URL</div>
<svg style="left:832.500px;top:541.500px" width="10" height="9" viewBox="0 0 20 18" fill="none" stroke="#5f6368" stroke-width="1.600"><path d="M1 4h9M14 4h5M12 1.500v5M1 9h4M9 9h10M7 6.500v5M1 14h9M14 14h5M12 11.500v5"/></svg>
<svg style="left:932.300px;top:542px" width="8" height="8" viewBox="0 0 16 16" fill="none" stroke="#444" stroke-width="1.800"><path d="M1.500 1.500l13 13M14.500 1.500l-13 13"/></svg>
<div style="left:0;top:563.400px;width:1000px;height:7px;background:#fff"></div>
<div style="left:0;top:563.400px;width:18.500px;height:7px;background:#f8f9fa"></div>
<div style="left:0;top:563.200px;width:971px;height:.7px;background:#e3e4e6"></div>
<div style="left:0;top:570.200px;width:1000px;height:22px;background:#f9fbfd"></div>
<div style="left:0;top:570px;width:1000px;height:.8px;background:#e4e6ea"></div>
<div style="left:225px;top:570.400px;width:107px;height:19.500px;background:#e1e9f7"></div>
<div style="left:0;top:590.100px;width:1000px;height:1.900px;background:#4a4d51"></div>
<div style="left:70.600px;top:590px;width:90.600px;height:2px;background:#e8891c"></div>
<div style="left:161.200px;top:590px;width:170.600px;height:2px;background:#1ec31e"></div>
<div style="left:24.600px;top:581px;width:7px;height:1.100px;background:#444746"></div><div style="left:27.550px;top:578px;width:1.100px;height:7px;background:#444746"></div>
<div style="left:47.600px;top:578.700px;width:8.600px;height:1.100px;background:#444746"></div><div style="left:47.600px;top:581.200px;width:8.600px;height:1.100px;background:#444746"></div><div style="left:47.600px;top:583.700px;width:8.600px;height:1.100px;background:#444746"></div>
<svg style="left:79px;top:576.500px" width="7.800" height="10.200" viewBox="0 0 16 21"><path d="M4 9V6a4 4 0 0 1 8 0v3" fill="none" stroke="#3c4043" stroke-width="2.400"/><rect x="0.500" y="8.500" width="15" height="12" rx="1.800" fill="#3c4043"/><circle cx="8" cy="14.500" r="1.700" fill="#f9fbfd"/></svg>
<div class="tab" style="left:90px">Drops de Baú</div>
<div class="car" style="left:150px;top:580.500px"></div>
<svg style="left:170px;top:576.500px" width="7.800" height="10.200" viewBox="0 0 16 21"><path d="M4 9V6a4 4 0 0 1 8 0v3" fill="none" stroke="#3c4043" stroke-width="2.400"/><rect x="0.500" y="8.500" width="15" height="12" rx="1.800" fill="#3c4043"/><circle cx="8" cy="14.500" r="1.700" fill="#f9fbfd"/></svg>
<div class="tab" style="left:181px">Config</div>
<div class="car" style="left:213.800px;top:580.500px"></div>
<svg style="left:233.4px;top:576.500px" width="7.800" height="10.200" viewBox="0 0 16 21"><path d="M4 9V6a4 4 0 0 1 8 0v3" fill="none" stroke="#0b57d0" stroke-width="2.400"/><rect x="0.500" y="8.500" width="15" height="12" rx="1.800" fill="#0b57d0"/><circle cx="8" cy="14.500" r="1.700" fill="#f9fbfd"/></svg>
<div class="tab" style="left:244.400px;color:#0b57d0">Itens do Element</div>
<div class="car" style="left:320.800px;top:580.500px;border-top-color:#0b57d0"></div>
<svg style="left:795px;top:552px" width="205" height="40" viewBox="795 552 205 40" font-family="Liberation Sans, Arial, sans-serif" font-weight="bold">
<defs>
<linearGradient id="lgb" x1="0" y1="0" x2="0" y2="1"><stop offset=".12" stop-color="#62c8f5"/><stop offset=".55" stop-color="#5f9fe6"/><stop offset=".92" stop-color="#8a7bc8"/></linearGradient>
<linearGradient id="lgp" x1="0" y1="0" x2="0" y2="1"><stop offset="0" stop-color="#f6a09e"/><stop offset="1" stop-color="#ee7f8e"/></linearGradient>
</defs>
<text x="804.800" y="584" font-size="26" fill="url(#lgb)" stroke="url(#lgb)" stroke-width="2.500" stroke-linejoin="round" textLength="60.600" lengthAdjust="spacingAndGlyphs">SUP</text>
<text x="890" y="584" font-size="26" fill="url(#lgb)" stroke="url(#lgb)" stroke-width="2.500" stroke-linejoin="round" textLength="56.600" lengthAdjust="spacingAndGlyphs">RTE</text>
<path d="M877.600 564a10.600 10.600 0 1 0 2.600 20.900c1 1.500 2.600 2.600 4.600 3-.9-1.100-1.200-2.700-1.100-4.300A10.600 10.600 0 0 0 877.600 564z" fill="url(#lgp)"/>
<text x="877.600" y="583" font-size="24" fill="#f29398" fill-opacity=".3" text-anchor="middle">O</text>
<text x="877.600" y="577.700" font-size="9" fill="#fff" text-anchor="middle" letter-spacing="1.300">•••</text>
<path d="M963.400 564.800L972.600 558.700 981.600 565.300" stroke="#f3868e" stroke-width="2.600" fill="none"/>
<text x="948.400" y="584.300" font-size="25" fill="#f3868e" stroke="#f3868e" stroke-width="1.500">G</text>
<text x="968.900" y="584.300" font-size="25" fill="#f3868e" stroke="#f3868e" stroke-width="1.500">M</text>
</svg>
</div>
</body>
</html>
